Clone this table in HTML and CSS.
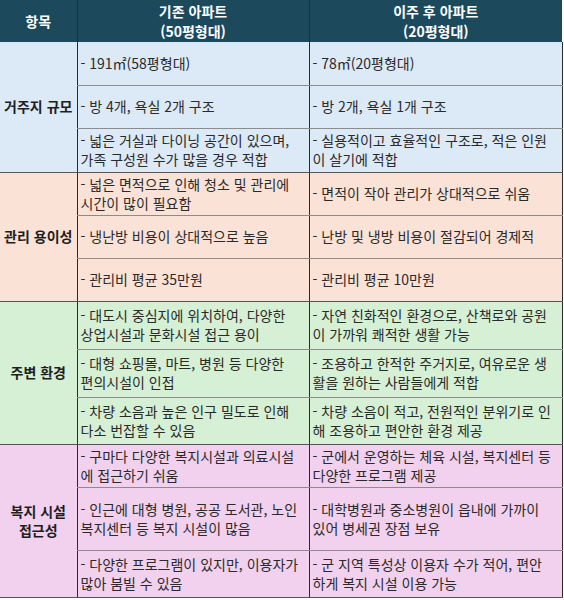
FILE: index.html
```html
<!DOCTYPE html>
<html lang="ko">
<head>
<meta charset="utf-8">
<link rel="stylesheet" href="styles.css">
</head>
<body>
<table class="cmp">
  <colgroup>
    <col class="c1"><col class="c2"><col class="c3">
  </colgroup>
  <thead>
    <tr class="head">
      <th>항목</th>
      <th>기존 아파트<br>(50평형대)</th>
      <th>이주 후 아파트<br>(20평형대)</th>
    </tr>
  </thead>
  <tbody class="g-blue">
    <tr class="h43">
      <th rowspan="3" class="cat">거주지 규모</th>
      <td>- 191㎡(58평형대)</td>
      <td>- 78㎡(20평형대)</td>
    </tr>
    <tr class="h43">
      <td>- 방 4개, 욕실 2개 구조</td>
      <td>- 방 2개, 욕실 1개 구조</td>
    </tr>
    <tr class="h44 last">
      <td>- 넓은 거실과 다이닝 공간이 있으며,<br>가족 구성원 수가 많을 경우 적합</td>
      <td>- 실용적이고 효율적인 구조로, 적은 인원<br>이 살기에 적합</td>
    </tr>
  </tbody>
  <tbody class="g-peach">
    <tr class="h43">
      <th rowspan="3" class="cat">관리 용이성</th>
      <td>- 넓은 면적으로 인해 청소 및 관리에<br>시간이 많이 필요함</td>
      <td>- 면적이 작아 관리가 상대적으로 쉬움</td>
    </tr>
    <tr class="h43">
      <td>- 냉난방 비용이 상대적으로 높음</td>
      <td>- 난방 및 냉방 비용이 절감되어 경제적</td>
    </tr>
    <tr class="h43 last">
      <td>- 관리비 평균 35만원</td>
      <td>- 관리비 평균 10만원</td>
    </tr>
  </tbody>
  <tbody class="g-green">
    <tr class="h48">
      <th rowspan="3" class="cat">주변 환경</th>
      <td>- 대도시 중심지에 위치하여, 다양한<br>상업시설과 문화시설 접근 용이</td>
      <td>- 자연 친화적인 환경으로, 산책로와 공원<br>이 가까워 쾌적한 생활 가능</td>
    </tr>
    <tr class="h48">
      <td>- 대형 쇼핑몰, 마트, 병원 등 다양한<br>편의시설이 인접</td>
      <td>- 조용하고 한적한 주거지로, 여유로운 생<br>활을 원하는 사람들에게 적합</td>
    </tr>
    <tr class="h47 last">
      <td>- 차량 소음과 높은 인구 밀도로 인해<br>다소 번잡할 수 있음</td>
      <td>- 차량 소음이 적고, 전원적인 분위기로 인<br>해 조용하고 편안한 환경 제공</td>
    </tr>
  </tbody>
  <tbody class="g-pink">
    <tr class="h43">
      <th rowspan="3" class="cat">복지 시설<br>접근성</th>
      <td>- 구마다 다양한 복지시설과 의료시설<br>에 접근하기 쉬움</td>
      <td>- 군에서 운영하는 체육 시설, 복지센터 등<br>다양한 프로그램 제공</td>
    </tr>
    <tr class="h63">
      <td>- 인근에 대형 병원, 공공 도서관, 노인<br>복지센터 등 복지 시설이 많음</td>
      <td>- 대학병원과 중소병원이 읍내에 가까이<br>있어 병세권 장점 보유</td>
    </tr>
    <tr class="h47 last">
      <td>- 다양한 프로그램이 있지만, 이용자가<br>많아 붐빌 수 있음</td>
      <td>- 군 지역 특성상 이용자 수가 적어, 편안<br>하게 복지 시설 이용 가능</td>
    </tr>
  </tbody>
</table>
</body>
</html>
```

FILE: styles.css
```css
html, body {
  margin: 0;
  padding: 0;
  background: #ffffff;
}
body {
  font-family: "Noto Sans CJK KR", "Noto Sans", sans-serif;
  font-size: 14px;
  color: #2a2a2a;
}
.cmp {
  width: 562px;
  border-collapse: collapse;
  table-layout: fixed;
}
.c1 { width: 77px; }
.c2 { width: 232px; }
.c3 { width: 253px; }

.head th {
  height: 42px;
  padding: 0;
  background: #1c4a5c;
  color: #ffffff;
  font-weight: bold;
  line-height: 20px;
  text-align: center;
  vertical-align: middle;
  border-left: 1px solid #2a2a2a;
}
.head th:first-child { border-left: none; }

td, .cat {
  padding: 0 3px;
  line-height: 19px;
  vertical-align: middle;
  text-align: left;
  border-left: 1px solid #2a2a2a;
  border-bottom: 1px solid #8c8c8c;
  word-break: break-all;
}
.cat {
  border-left: none;
  padding: 0;
  text-align: center;
  font-weight: bold;
  color: #1e1e1e;
  border-bottom: 1px solid #555555;
  word-break: keep-all;
}
tr.last td { border-bottom: 1px solid #555555; }

.h43 { height: 43px; }
.h44 { height: 44px; }
.h47 { height: 47px; }
.h48 { height: 48px; }
.h63 { height: 63px; }

.g-blue td, .g-blue .cat { background: #dce9f7; }
.g-peach td, .g-peach .cat { background: #fbe2d6; }
.g-green td, .g-green .cat { background: #d5f0d4; }
.g-pink td, .g-pink .cat { background: #f1d1ee; }
.cmp td:last-child { border-right: 1px solid #2a2a2a; }
```
